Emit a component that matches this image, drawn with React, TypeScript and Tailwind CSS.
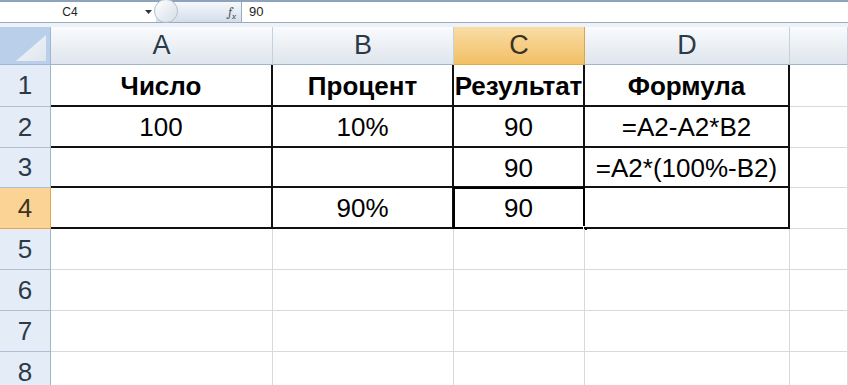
import React from "react";

const font = { fontFamily: '"Liberation Sans", Arial, sans-serif' };

const cols = ["A", "B", "C", "D", ""];

type Cell = { text?: string; bold?: boolean };

const data: Cell[][] = [
  [{ text: "Число", bold: true }, { text: "Процент", bold: true }, { text: "Результат", bold: true }, { text: "Формула", bold: true }],
  [{ text: "100" }, { text: "10%" }, { text: "90" }, { text: "=A2-A2*B2" }],
  [{}, {}, { text: "90" }, { text: "=A2*(100%-B2)" }],
  [{}, { text: "90%" }, { text: "90" }, {}],
];

const FormulaBar: React.FC = () => (
  <div className="flex h-[23px] border-t-2 border-b border-t-[#8ea2bb] border-b-[#9aabbf] bg-white text-[12px] text-[#222]">
    <div className="flex w-[140px] items-center justify-center">C4</div>
    <div className="flex w-[16px] items-center justify-center">
      <svg width="7" height="4" viewBox="0 0 7 4">
        <path d="M0 0h7L3.5 4z" fill="#333" />
      </svg>
    </div>
    <div className="relative flex w-[85px] items-center justify-end bg-linear-to-b from-[#f6f8fb] to-[#d3deeb] pr-[5px]">
      <div className="absolute left-[-2px] top-[-3px] h-[24px] w-[24px] rounded-full border border-[#b3bfcd] bg-linear-to-br from-[#ffffff] to-[#d6dee8]" />
      <span className="font-serif text-[13px] italic text-[#555]">
        f<sub className="text-[9px]">x</sub>
      </span>
    </div>
    <div className="flex items-center border-l border-[#9aabbf] pl-[7px] text-[13px]">90</div>
  </div>
);

const App: React.FC = () => {
  return (
    <div className="h-[385px] w-[848px] overflow-hidden bg-white" style={font}>
      <FormulaBar />
      <div className="h-[4px] bg-[#eef2f7]" />
      <div className="grid grid-cols-[51px_222px_181px_131px_205px_1fr] grid-rows-[38px_42px_41px_40px_41px_41px_41px_41px_41px]">
        {/* corner */}
        <div className="relative border-r border-b border-[#9eb6ce] bg-[#b9cfea]">
          <div
            className="absolute bottom-[3px] right-[4px] h-[26px] w-[30px] bg-linear-to-br from-[#f4f6f9] to-[#dfe6ee]"
            style={{ clipPath: "polygon(100% 0, 100% 100%, 0 100%)" }}
          />
        </div>
        {cols.map((c, i) =>
          i === 2 ? (
            <div
              key={i}
              className="flex items-center justify-center border-r border-b border-r-[#d8a64f] border-b-[#e1a94a] bg-linear-to-b from-[#f9dca4] to-[#f2c064] text-[27px] text-[#3b3222]"
            >
              {c}
            </div>
          ) : (
            <div
              key={i}
              className="flex items-center justify-center border-r border-b border-r-[#c5d1de] border-b-[#9eb6ce] bg-linear-to-b from-[#f9fbfd] to-[#dfe5ed] text-[27px] text-[#2c3a48]"
            >
              {c}
            </div>
          )
        )}
        {Array.from({ length: 8 }).map((_, r) => {
          const sel = r === 3;
          return (
            <React.Fragment key={r}>
              <div
                className={
                  sel
                    ? "flex items-center justify-center border-r border-b border-[#e0a94f] bg-[#fbd495] text-[26px] text-[#3b3222]"
                    : "flex items-center justify-center border-r border-b border-r-[#9eb6ce] border-b-[#aebfd3] bg-[#e4ecf7] text-[26px] text-[#2c3a48]"
                }
              >
                {r + 1}
              </div>
              {cols.map((_, c) => {
                const inTable = r < 4 && c < 4;
                const cell = inTable ? data[r][c] : {};
                const active = r === 3 && c === 2;
                let cls = "relative flex items-center justify-center whitespace-nowrap text-[26px] text-black ";
                if (inTable) {
                  cls += "border-b-2 border-r-2 border-[#111] ";
                } else {
                  cls += "border-b border-r border-[#d6d9dd] ";
                }
                if (cell.bold) cls += "font-bold ";
                return (
                  <div key={c} className={cls}>
                    {active && (
                      <>
                        <div className="pointer-events-none absolute inset-[-1px_-2px_-2px_-1px] border-2 border-black" />
                        <div className="absolute bottom-[-4px] right-[-5px] h-[5px] w-[5px] border border-white bg-black" />
                      </>
                    )}
                    <span className="pt-[2px]">{cell.text}</span>
                  </div>
                );
              })}
            </React.Fragment>
          );
        })}
      </div>
    </div>
  );
};

export default App;
